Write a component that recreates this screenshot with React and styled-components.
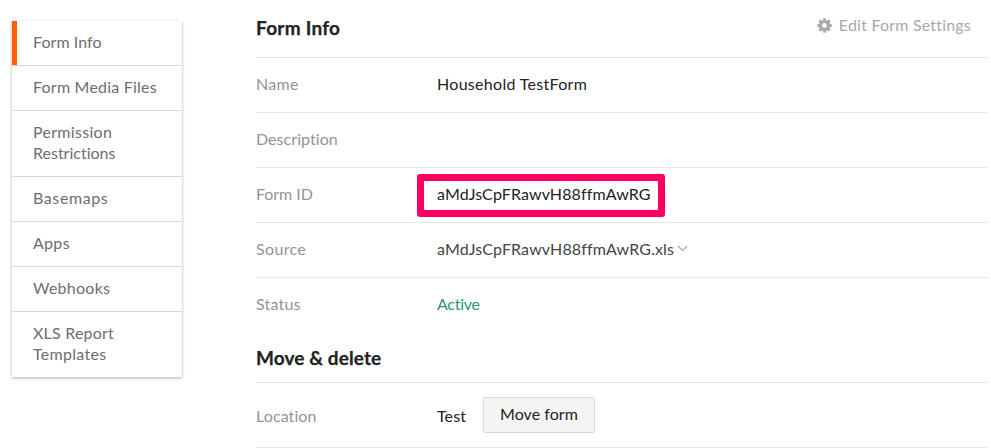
import React from "react";
import styled, { createGlobalStyle } from "styled-components";

const Global = createGlobalStyle`
  * { box-sizing: border-box; }
  body {
    margin: 0;
    background: #fff;
    color: #222;
    font: 16px/21px "Lato", "Liberation Sans", sans-serif;
    font-variant-ligatures: none;
    overflow: hidden;
  }
`;

const Page = styled.div`
  display: flex;
  align-items: flex-start;
  width: 991px;
  height: 448px;
  padding-left: 12px;
  overflow: hidden;
`;

const Sidebar = styled.nav`
  width: 170px;
  margin: 21px 74px 0 0;
  background: #fff;
  box-shadow: 0 1px 3px rgba(0, 0, 0, 0.32);
`;

const NavItem = styled.a`
  display: block;
  padding: 10px 20px 13px ${(p) => (p.$active ? 16 : 21)}px;
  border-left: ${(p) => (p.$active ? "5px solid #ff5f00" : "0")};
  color: #6e6e6e;
`;

const NavCell = styled.div`
  border-bottom: 1px solid #dadada;
  &:last-child { border-bottom: 0; }
`;

const Label = styled.span`
  display: ${(p) => (p.$block ? "block" : "inline")};
  letter-spacing: ${(p) => p.$track || 0}px;
  white-space: nowrap;
`;

const Content = styled.main`
  width: 732px;
`;

const SectionHead = styled.header`
  display: flex;
  justify-content: space-between;
  height: ${(p) => p.$height}px;
  padding-top: ${(p) => p.$top}px;
`;

const Title = styled.h2`
  margin: 0;
  font-size: 19px;
  line-height: 24px;
  font-weight: 700;
  -webkit-text-stroke: 0.25px currentColor;
`;

const EditLink = styled.a`
  display: flex;
  align-items: center;
  gap: 7px;
  height: 21px;
  margin: -2px 17px 0 0;
  color: #a8a8a8;
`;

const GearIcon = styled.svg`
  width: 15px;
  height: 15px;
  margin-top: 2px;
`;

const Row = styled.div`
  display: flex;
  align-items: center;
  height: ${(p) => p.$height || 55}px;
  padding-bottom: ${(p) => (p.$height ? 0 : 3)}px;
  border-top: 1px solid #e6e6e6;
  &:last-child { border-bottom: 1px solid #e6e6e6; }
`;

const Key = styled.div`
  width: 181px;
  color: #949494;
`;

const Value = styled.div`
  display: flex;
  align-items: center;
  color: ${(p) => p.$color || "#222"};
`;

const Highlight = styled.div`
  display: flex;
  align-items: center;
  width: 248px;
  height: 43px;
  margin: 3px 0 0 -20px;
  padding: 0 0 3px 13px;
  border: 7px solid #ff0062;
  border-radius: 3px;
`;

const Chevron = styled.svg`
  width: 11px;
  height: 7px;
  margin: -1px 0 0 3px;
`;

const Button = styled.button`
  width: 112px;
  height: 36px;
  margin: -1px 0 0 17px;
  padding: 0 0 2px;
  border: 1px solid #d9d9d9;
  border-radius: 2px;
  background: #f4f4f4;
  color: #222;
  font: inherit;
  font-variant-ligatures: none;
`;

const nav = [
  [["Form Info", 0.05]],
  [["Form Media Files", 0.22]],
  [["Permission", 0.3], ["Restrictions", 0]],
  [["Basemaps", 0.6]],
  [["Apps", 0.3]],
  [["Webhooks", 0.25]],
  [["XLS Report", 0.2], ["Templates", 0.3]],
];

function Gear() {
  const teeth = [0, 45, 90, 135, 180, 225, 270, 315];
  return (
    <GearIcon viewBox="-7.5 -7.5 15 15">
      <circle r="4" fill="none" stroke="#aaa" strokeWidth="3.2" />
      {teeth.map((a) => (
        <path key={a} d="M-1.7-5 -1.2-7.3H1.2L1.7-5Z" fill="#aaa" transform={`rotate(${a})`} />
      ))}
    </GearIcon>
  );
}

export default function App() {
  return (
    <>
      <Global />
      <Page>
        <Sidebar>
          {nav.map((lines, i) => (
            <NavCell key={i}>
              <NavItem $active={i === 0}>
                {lines.map(([text, track]) => (
                  <Label key={text} $block $track={track}>{text}</Label>
                ))}
              </NavItem>
            </NavCell>
          ))}
        </Sidebar>
        <Content>
          <SectionHead $height={57} $top={16}>
            <Title><Label $track={0.25}>Form Info</Label></Title>
            <EditLink>
              <Gear />
              <Label $track={0.2}>Edit Form Settings</Label>
            </EditLink>
          </SectionHead>
          <Row>
            <Key><Label $track={0.3}>Name</Label></Key>
            <Value><Label $track={0.3}>Household TestForm</Label></Value>
          </Row>
          <Row>
            <Key><Label $track={0.05}>Description</Label></Key>
          </Row>
          <Row>
            <Key><Label $track={-0.05}>Form ID</Label></Key>
            <Value>
              <Highlight><Label $track={0.12}>aMdJsCpFRawvH88ffmAwRG</Label></Highlight>
            </Value>
          </Row>
          <Row>
            <Key><Label $track={0.35}>Source</Label></Key>
            <Value $color="#444">
              <Label $track={0.14}>aMdJsCpFRawvH88ffmAwRG.xls</Label>
              <Chevron viewBox="0 0 11 7">
                <path d="M1 1 5.5 5.5 10 1" fill="none" stroke="#aaa" strokeWidth="1.2" />
              </Chevron>
            </Value>
          </Row>
          <Row>
            <Key><Label $track={0.2}>Status</Label></Key>
            <Value $color="#1f9a6c"><Label $track={-0.25}>Active</Label></Value>
          </Row>
          <SectionHead $height={50} $top={14}>
            <Title><Label $track={0.1}>Move &amp; delete</Label></Title>
          </SectionHead>
          <Row $height={66}>
            <Key><Label $track={0.1}>Location</Label></Key>
            <Value>
              <Label $track={0.1}>Test</Label>
              <Button><Label $track={0.05}>Move form</Label></Button>
            </Value>
          </Row>
        </Content>
      </Page>
    </>
  );
}
